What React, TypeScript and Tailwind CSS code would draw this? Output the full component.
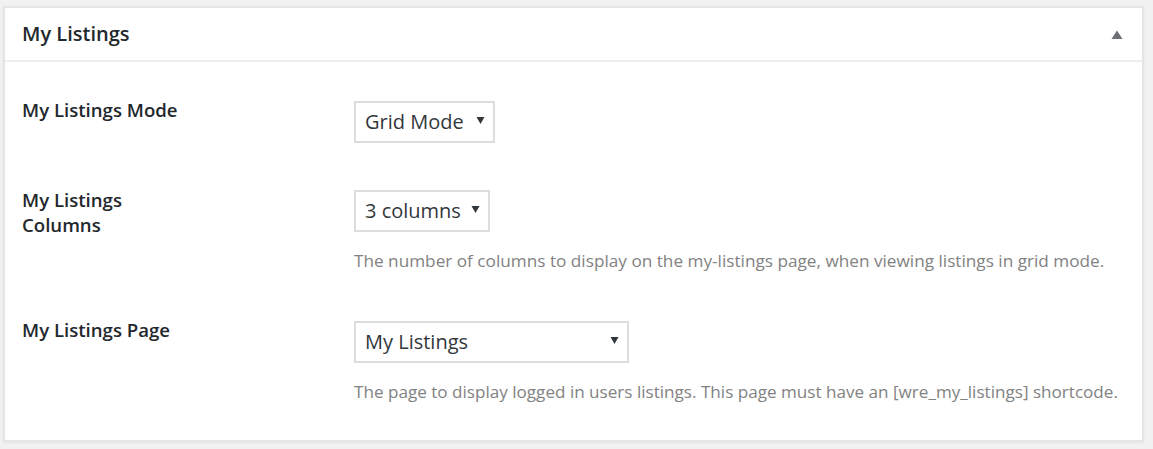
import React from 'react'

const FONT = '"Open Sans", "Noto Sans", "Liberation Sans", sans-serif'

function Select({ label, width }: { label: string; width: number }) {
  return (
    <div
      className="flex h-[42px] items-center justify-between border-2 border-[#dddddd] bg-white pl-[9px] pr-[8px] text-[20px] text-[#32373c]"
      style={{ width }}
    >
      <span className="mb-[1px]">{label}</span>
      <svg width="9" height="9" viewBox="0 0 9 9" className="mb-[3px]">
        <path d="M0.5 1 L8.5 1 L4.5 8 Z" fill="#32373c" />
      </svg>
    </div>
  )
}

export default function App() {
  return (
    <div className="min-h-[449px] bg-[#f1f1f1] pl-[3px] pt-[6px]" style={{ fontFamily: FONT }}>
      <div className="w-[1141px] border-2 border-[#e5e5e5] bg-white shadow-[0_1px_2px_rgba(0,0,0,0.06)]">
        <div className="flex h-[54px] items-center justify-between border-b-2 border-[#eeeeee] pl-[17px] pr-[17px]">
          <h2 className="text-[20px] font-semibold text-[#23282d]">My Listings</h2>
          <svg width="12" height="10" viewBox="0 0 12 10" className="mr-[2px] mt-[1px]">
            <path d="M6 0.5 L11.5 9 L0.5 9 Z" fill="#6b7077" />
          </svg>
        </div>

        <div className="pb-[36px] pl-[17px]">
          <div className="flex items-start pt-[35px]">
            <div className="w-[332px] text-[18.6px] font-semibold leading-[25px] text-[#23282d]">My Listings Mode</div>
            <div className="mt-[4px]">
              <Select label="Grid Mode" width={141} />
            </div>
          </div>

          <div className="flex items-start pt-[44px]">
            <div className="w-[332px] text-[18.6px] font-semibold leading-[25px] text-[#23282d]">
              <div className="w-[165px]">My Listings Columns</div>
            </div>
            <div className="mt-[3px] flex flex-col">
              <Select label="3 columns" width={136} />
              <p className="mt-[17px] text-[17.2px] leading-[24px] text-[#828282]">
                The number of columns to display on the my-listings page, when viewing listings in grid mode.
              </p>
            </div>
          </div>

          <div className="flex items-start pt-[44px]">
            <div className="w-[332px] text-[18.6px] font-semibold leading-[25px] text-[#23282d]">My Listings Page</div>
            <div className="mt-[4px] flex flex-col">
              <Select label="My Listings" width={275} />
              <p className="mt-[17px] text-[17.1px] leading-[24px] text-[#828282]">
                The page to display logged in users listings. This page must have an [wre_my_listings] shortcode.
              </p>
            </div>
          </div>
        </div>
      </div>
    </div>
  )
}
